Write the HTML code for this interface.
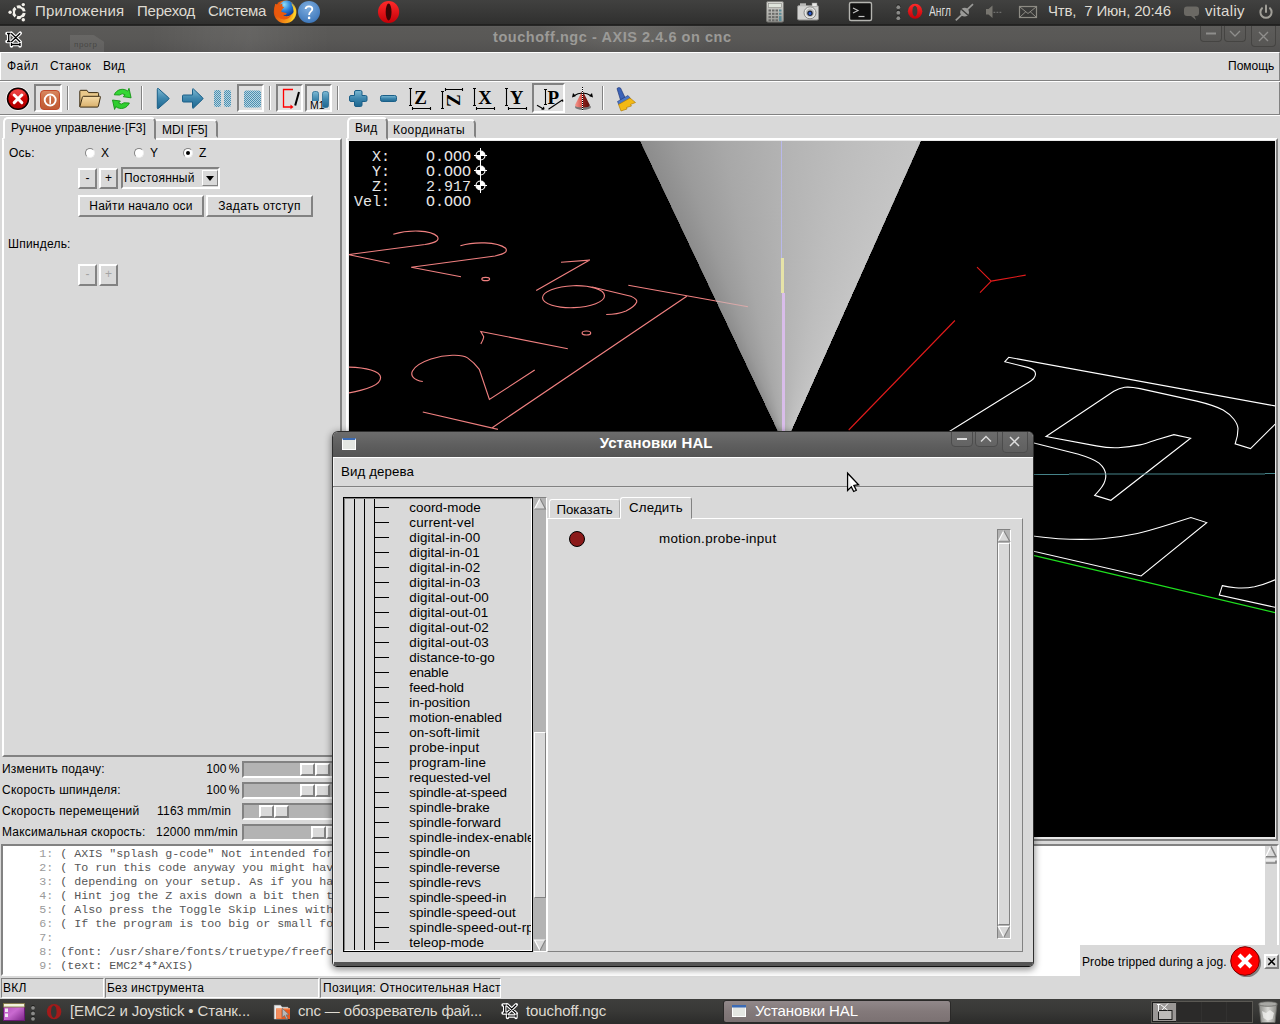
<!DOCTYPE html>
<html><head><meta charset="utf-8"><title>AXIS</title>
<style>
html,body{margin:0;padding:0}
body{width:1280px;height:1024px;overflow:hidden;position:relative;background:#d9d9d9;font-family:"Liberation Sans",sans-serif;font-size:12px;color:#000}
.a{position:absolute;box-sizing:border-box;white-space:nowrap}
.r{border:2px solid;border-color:#fff #828282 #828282 #fff}
.s{border:2px solid;border-color:#828282 #fff #fff #828282}
.r1{border:1px solid;border-color:#fff #828282 #828282 #fff}
.s1{border:1px solid;border-color:#828282 #fff #fff #828282}
.t{position:absolute;white-space:nowrap;line-height:14px;letter-spacing:.22px}
.btn{text-align:center;line-height:17px;background:#d9d9d9;letter-spacing:.2px}
.pt{position:absolute;white-space:pre;color:#dfdbd2;font-size:15px;line-height:18px}
.tr{position:absolute;white-space:nowrap;font-size:13.4px;line-height:15px;left:77px;color:#000}
.tk{position:absolute;left:42px;width:15px;height:1px;background:#000}
.gc{position:absolute;white-space:pre;font-family:"Liberation Mono",monospace;font-size:11.667px;line-height:14px;left:4.4px;color:#565656}
.gc i{font-style:normal;color:#9a9a9a}
.dro{position:absolute;white-space:pre;font-family:"Liberation Mono",monospace;font-size:15px;line-height:15px;left:354px;color:#e6e6e6}
svg{position:absolute;overflow:visible}
</style></head>
<body>
<!-- ===== AXIS window title ===== -->
<div class="a" style="left:0;top:25px;width:1280px;height:27px;background:radial-gradient(ellipse 90px 30px at 625px 10px,rgba(255,250,240,.10),rgba(255,250,240,0)),linear-gradient(#6a6968 0,#5b5a58 2px,#595856 50%,#525150)"></div>
<div class="a" style="left:0;top:26px;width:1280px;height:26px;background:linear-gradient(90deg,rgba(255,255,255,0) 0,rgba(255,255,255,0) 150px,rgba(255,255,255,.05) 210px,rgba(255,255,255,.07) 250px,rgba(255,255,255,0) 330px)"></div>
<div class="a" style="left:70px;top:35px;width:34px;height:17px;background:rgba(255,255,255,.085);clip-path:polygon(0 0,70% 0,100% 40%,100% 100%,0 100%)"></div>
<div class="t" style="left:74px;top:40px;font-size:8px;line-height:9px;color:rgba(50,50,48,.6);letter-spacing:.6px">прогр</div>
<svg style="left:0;top:25px" width="30" height="27" viewBox="0 25 30 27"><path d="M7 33.500h3.500M8.700 33.500v8M7 41.500h3.500M11.200 33.200l9 8.800M20.200 33.200l-9 8.800M11.500 44.500h8.500M11.500 43v3M20 43v3" stroke="#fff" stroke-width="3.600" stroke-linecap="round" stroke-linejoin="round" fill="none"/><path d="M7 33.500h3.500M8.700 33.500v8M7 41.500h3.500M11.200 33.200l9 8.800M20.200 33.200l-9 8.800M11.500 44.500h8.500M11.500 43v3M20 43v3" stroke="#000" stroke-width="1.300" fill="none"/></svg>
<div class="t" style="left:493px;top:29px;font-size:14.5px;font-weight:bold;color:#9b9a97;line-height:16px;letter-spacing:.55px">touchoff.ngc - AXIS 2.4.6 on cnc</div>
<!-- title buttons -->
<div class="a" style="left:1200px;top:25px;width:22px;height:17px;border:1px solid #454442;border-top:0;border-radius:0 0 4px 4px;background:linear-gradient(#5e5d5b,#575654)"></div>
<div class="a" style="left:1224px;top:25px;width:22px;height:17px;border:1px solid #454442;border-top:0;border-radius:0 0 4px 4px;background:linear-gradient(#5e5d5b,#575654)"></div>
<div class="a" style="left:1251px;top:25px;width:25px;height:22px;border:1px solid #454442;border-top:0;border-radius:0 0 4px 4px;background:linear-gradient(#5e5d5b,#575654)"></div>
<svg style="left:1200px;top:25px" width="80" height="24"><path d="M6 8.5h10" stroke="#8f8e8c" stroke-width="2" fill="none"/><path d="M30 6l5 5 5-5" stroke="#8f8e8c" stroke-width="1.3" fill="none"/><path d="M59 7l9 9M68 7l-9 9" stroke="#8f8e8c" stroke-width="1.4" fill="none"/></svg>

<!-- menubar -->
<div class="a" style="left:0;top:52px;width:1280px;height:28px;background:#d9d9d9;border-top:1px solid #fff;border-left:1px solid #fff;border-right:1px solid #828282"></div>
<div class="t" style="left:7px;top:59px;letter-spacing:.5px">Файл</div>
<div class="t" style="left:50px;top:59px;letter-spacing:.3px">Станок</div>
<div class="t" style="left:103px;top:59px;letter-spacing:0">Вид</div>
<div class="t" style="left:1228px;top:59px;letter-spacing:0">Помощь</div>
<div class="a" style="left:0;top:80px;width:1280px;height:2px;border-top:1px solid #828282;border-bottom:1px solid #fff"></div>
<div class="a" style="left:1278px;top:82px;width:2px;height:32px;border-right:1px solid #828282"></div>
<div class="a" style="left:0;top:114px;width:1280px;height:2px;border-top:1px solid #828282;border-bottom:1px solid #fff"></div>
<!-- toolbar -->
<div class="a s" style="left:34px;top:84px;width:28px;height:28px;background:#dfdfdf"></div>
<div class="a s" style="left:237px;top:84px;width:27px;height:28px;background:#dfdfdf"></div>
<div class="a s" style="left:276px;top:84px;width:27px;height:28px;background:#dfdfdf"></div>
<div class="a s" style="left:305px;top:84px;width:27px;height:28px;background:#dfdfdf"></div>
<div class="a s" style="left:532px;top:83px;width:33px;height:30px;background:#dfdfdf"></div>
<svg style="left:0;top:82px" width="660" height="32" viewBox="0 82 660 32">
<defs>
<linearGradient id="bl" x1="0" y1="0" x2="0" y2="1"><stop offset="0" stop-color="#7db9d3"/><stop offset=".5" stop-color="#3d86ad"/><stop offset="1" stop-color="#1d668f"/></linearGradient>
<linearGradient id="rd" x1="0" y1="0" x2="0" y2="1"><stop offset="0" stop-color="#e82222"/><stop offset=".5" stop-color="#cc0404"/><stop offset="1" stop-color="#a80000"/></linearGradient>
<linearGradient id="og" x1="0" y1="0" x2="0" y2="1"><stop offset="0" stop-color="#d98a63"/><stop offset=".5" stop-color="#c9683f"/><stop offset="1" stop-color="#bf5a33"/></linearGradient>
<linearGradient id="fd" x1="0" y1="0" x2="0" y2="1"><stop offset="0" stop-color="#f6dca8"/><stop offset="1" stop-color="#d9b06c"/></linearGradient>
<linearGradient id="cn" x1="0" y1="0" x2="1" y2="0"><stop offset="0" stop-color="#f49a90"/><stop offset=".45" stop-color="#d9574d"/><stop offset=".55" stop-color="#8e1f1a"/><stop offset="1" stop-color="#5a100c"/></linearGradient>
<pattern id="st" width="2" height="2" patternUnits="userSpaceOnUse"><rect width="2" height="2" fill="#b7d5e2"/><rect width="1" height="1" fill="#4d8fb0"/><rect x="1" y="1" width="1" height="1" fill="#4d8fb0"/></pattern>
</defs>
<!-- separators -->
<g stroke-width="1"><path d="M67.5 86v24M141.5 86v24M269.5 86v24M337.5 86v24M602.5 86v24" stroke="#828282"/><path d="M68.5 86v24M142.5 86v24M270.5 86v24M338.5 86v24M603.5 86v24" stroke="#fff"/></g>
<!-- estop -->
<circle cx="18" cy="98.800" r="11.800" fill="none" stroke="#fff" stroke-width="1" opacity=".75"/><circle cx="18" cy="98.800" r="10.500" fill="url(#rd)" stroke="#100000" stroke-width="1.500"/>
<ellipse cx="18" cy="93.5" rx="7.5" ry="4" fill="#ff8a8a" opacity=".35"/>
<path d="M14.200 95l7.600 7.600M21.800 95l-7.600 7.600" stroke="#fff" stroke-width="3" stroke-linecap="round"/>
<!-- power -->
<rect x="40.5" y="90.5" width="19" height="19" rx="3.5" fill="url(#og)" stroke="#c24a2a" stroke-width="1"/>
<circle cx="50.200" cy="100" r="5.500" fill="none" stroke="#fff" stroke-width="1.900"/><path d="M50.200 96.300v7.400" stroke="#fff" stroke-width="1.600"/>
<!-- folder -->
<path d="M79.8 106.6V91.2q0-.9.9-.9h6.2l1.6 2.3h9.2q.9 0 .9.9v3.2" fill="#e9c88a" stroke="#3a2a10" stroke-width="1"/>
<path d="M79.8 106.8l2.6-9.6q.3-.9 1.200-.9h16q1 0 .8.900l-2 9q-.2.900-1.200.9H80.600q-.9 0-.8-.3z" fill="url(#fd)" stroke="#3a2a10" stroke-width="1"/>
<!-- reload -->
<path d="M114.24 94.80A8.8 8.8 0 0 1 127.82 91.17L129.00 88.32L131.09 97.80L123.25 96.74L124.99 94.79A4.2 4.2 0 0 0 119.54 95.03Z" fill="#35d835" stroke="#149414" stroke-width=".9" stroke-linejoin="round"/>
<path d="M129.36 103.00A8.8 8.8 0 0 1 115.78 106.63L114.60 109.48L112.51 100.00L120.35 101.06L118.61 103.01A4.2 4.2 0 0 0 124.06 102.77Z" fill="#2fce2f" stroke="#149414" stroke-width=".9" stroke-linejoin="round"/>
<!-- play -->
<path d="M158.300 88.500q-1-.5-1 .8v18.500q0 1.300 1 .7l10.400-9.200q.8-.8 0-1.500z" fill="url(#bl)" stroke="#1a5f88" stroke-width="1"/>
<!-- step -->
<path d="M183.500 95h9v-5.500q0-1.200 1-.5l9.200 8.800q.7.700 0 1.400l-9.200 8.800q-1 .7-1-.5V102h-9q-1 0-1-1v-5q0-1 1-1z" fill="url(#bl)" stroke="#1a5f88" stroke-width="1"/>
<!-- pause (disabled) -->
<rect x="214" y="90" width="7" height="17" rx="2" fill="url(#st)"/><rect x="224" y="90" width="7" height="17" rx="2" fill="url(#st)"/>
<!-- stop (disabled) -->
<rect x="244" y="90.500" width="17" height="17" rx="2" fill="url(#st)"/>
<!-- skip -->
<path d="M293 89.500h-9.500v17.500h8" fill="none" stroke="#f00" stroke-width="1.300"/><path d="M290.500 104.500l3 2.500l-3 2.200z" fill="#f00"/>
<path d="M299 92l-3.800 13.500" stroke="#000" stroke-width="2"/>
<!-- M1 -->
<rect x="312.500" y="91.500" width="6" height="16" rx="2" fill="url(#bl)" stroke="#2a6f96" stroke-width=".8"/><rect x="322.500" y="91.500" width="6" height="16" rx="2" fill="url(#bl)" stroke="#2a6f96" stroke-width=".8"/>
<rect x="310" y="101" width="12.500" height="9" fill="#dfdfdf"/>
<text x="310" y="109" font-family="Liberation Sans" font-size="10.500" fill="#000">M1</text>
<!-- plus / minus -->
<path d="M356 90.500h4.500q1.500 0 1.500 1.500v3.500h3.500q1.500 0 1.500 1.500v3q0 1.500-1.500 1.500H362v3.500q0 1.500-1.500 1.500H356q-1.500 0-1.500-1.500V101.500H351q-1.500 0-1.500-1.500v-3q0-1.500 1.500-1.500h3.500V92q0-1.500 1.500-1.500z" fill="url(#bl)" stroke="#1a5f88" stroke-width="1"/>
<rect x="380.500" y="95.500" width="16" height="6" rx="1.800" fill="url(#bl)" stroke="#1a5f88" stroke-width="1"/>
<!-- Z -->
<g stroke="#000" stroke-width="1.100" fill="none">
<path d="M410.500 88v17.500M409 88.500h3M409 105.500h3M412.500 108.500h18M412.500 107v3M430.500 107v3"/>
<path d="M442.500 91v18M441 91.500h3M441 108.500h3M445.500 89.500h17.500M445.500 88v3M462.500 88v3"/>
<path d="M474.500 88v17.500M473 88.500h3M473 105.500h3M476.500 108.500h18M476.500 107v3M494.500 107v3"/>
<path d="M506.500 88v17.500M505 88.500h3M505 105.500h3M508.500 108.500h18M508.500 107v3M526.500 107v3"/>
<path d="M545.500 89.500v15M544 89.500h3M544 104.500h3"/>
<path d="M537 105.200l7 4.100M548.500 109.300l14.200-9.600M562.700 99.700v2M544 109.300l-.5-2.500M544 109.300l-2.500 0"/>
</g>
<g font-family="Liberation Serif" font-weight="bold" font-size="19" fill="#000">
<text x="414.300" y="103.500">Z</text>
<text x="478.200" y="103.500" font-size="18.500">X</text>
<text x="510" y="103.500" font-size="18.500">Y</text>
<text x="547.500" y="103.800" font-size="19">P</text>
<text transform="translate(447 94) rotate(90)" x="0" y="0" font-size="19">Z</text>
</g>
<!-- cone -->
<ellipse cx="583" cy="107" rx="8" ry="3" fill="#000" opacity=".45"/>
<path d="M582.400 90.400L575 105q0 2.500 7.400 2.500t7.400-2.500z" fill="url(#cn)"/>
<path d="M573.500 96q9-6 18 0" fill="none" stroke="#000" stroke-width="1.200"/>
<path d="M572 97.500l1-4.500l3 3zM593 97.500l-1-4.500l-3 3z" fill="#000"/>
<path d="M582.500 87v24" stroke="#000" stroke-width="1" stroke-dasharray="1 1"/><path d="M582.500 88v23" stroke="#fff" stroke-width="1" stroke-dasharray="1 1"/>
<!-- broom -->
<path d="M617 88.500q1.500-1.500 3.500-.5l4.500 9.500l-4.500 2.500z" fill="#3b63b8" stroke="#22397a" stroke-width=".7"/>
<path d="M617.500 101.500l10.500-6l2.500 3l-11.500 6.500z" fill="#4a78c8" stroke="#22397a" stroke-width=".6"/>
<path d="M618.500 104.500l11.500-6.500l5.500 4.500l-5 2l1 1.500l-5 1.500l.5 1.500l-6 2z" fill="#f3b914" stroke="#a97400" stroke-width=".6"/>
</svg>


<!-- left notebook -->
<div class="a r" style="left:2px;top:138px;width:340px;height:619px"></div>
<div class="a" style="left:3px;top:117px;width:153px;height:23px;background:#d9d9d9;border:2px solid;border-color:#fff #828282 #d9d9d9 #fff;border-radius:5px 5px 0 0"></div>
<div class="a" style="left:156px;top:119px;width:62px;height:19px;background:#d9d9d9;border:2px solid;border-color:#fff #828282 transparent #d9d9d9;border-radius:0 5px 0 0;border-left:0"></div>
<div class="t" style="left:11px;top:121px;letter-spacing:.05px">Ручное управление·[F3]</div>
<div class="t" style="left:162px;top:123px;letter-spacing:-.05px">MDI [F5]</div>

<div class="t" style="left:9px;top:146px">Ось:</div>
<div class="t" style="left:101px;top:146px">X</div>
<div class="t" style="left:150px;top:146px">Y</div>
<div class="t" style="left:199px;top:146px">Z</div>
<div class="a" style="left:85px;top:148px;width:10px;height:10px;border-radius:50%;background:#fff;border:1px solid;border-color:#828282 #eee #eee #828282"></div>
<div class="a" style="left:134px;top:148px;width:10px;height:10px;border-radius:50%;background:#fff;border:1px solid;border-color:#828282 #eee #eee #828282"></div>
<div class="a" style="left:183px;top:148px;width:10px;height:10px;border-radius:50%;background:#fff;border:1px solid;border-color:#828282 #eee #eee #828282"></div>
<div class="a" style="left:186px;top:151px;width:4px;height:4px;border-radius:50%;background:#000"></div>

<div class="a r btn" style="left:78px;top:168px;width:19px;height:21px">-</div>
<div class="a r btn" style="left:99px;top:168px;width:19px;height:21px">+</div>
<div class="a s" style="left:121px;top:167px;width:99px;height:22px"></div>
<div class="t" style="left:124px;top:171px">Постоянный</div>
<div class="a r1" style="left:202px;top:170px;width:16px;height:16px"></div>
<div class="a" style="left:205.800px;top:176px;width:0;height:0;border:4.500px solid transparent;border-top:5px solid #000;border-bottom:0"></div>
<div class="a r btn" style="left:78px;top:195px;width:126px;height:22px;line-height:18px">Найти начало оси</div>
<div class="a r btn" style="left:206px;top:195px;width:107px;height:22px;line-height:18px;letter-spacing:.32px">Задать отступ</div>
<div class="t" style="left:8px;top:237px">Шпиндель:</div>
<div class="a r btn" style="left:78px;top:264px;width:19px;height:22px;color:#a3a3a3">-</div>
<div class="a r btn" style="left:99px;top:264px;width:19px;height:22px;color:#a3a3a3">+</div>

<!-- sliders -->
<div class="t" style="left:2px;top:762px">Изменить подачу:</div>
<div class="t" style="left:2px;top:783px">Скорость шпинделя:</div>
<div class="t" style="left:2px;top:804px">Скорость перемещений</div>
<div class="t" style="left:2px;top:825px">Максимальная скорость:</div>
<div class="t" style="left:140px;width:99.500px;text-align:right;top:762px;letter-spacing:0;word-spacing:-.900px">100 %</div>
<div class="t" style="left:140px;width:99.500px;text-align:right;top:783px;letter-spacing:0;word-spacing:-.900px">100 %</div>
<div class="t" style="left:157px;top:804px">1163 mm/min</div>
<div class="t" style="left:156px;top:825px">12000 mm/min</div>
<div class="a s" style="left:242px;top:761px;width:100px;height:17px;background:#b3b3b3"></div>
<div class="a s" style="left:242px;top:782px;width:100px;height:17px;background:#b3b3b3"></div>
<div class="a s" style="left:242px;top:803px;width:100px;height:17px;background:#b3b3b3"></div>
<div class="a s" style="left:242px;top:824px;width:100px;height:17px;background:#b3b3b3"></div>
<div class="a r" style="left:300px;top:763px;width:15px;height:13px;background:#d9d9d9"></div><div class="a r" style="left:315px;top:763px;width:15px;height:13px;background:#d9d9d9"></div>
<div class="a r" style="left:300px;top:784px;width:15px;height:13px;background:#d9d9d9"></div><div class="a r" style="left:315px;top:784px;width:15px;height:13px;background:#d9d9d9"></div>
<div class="a r" style="left:259px;top:805px;width:15px;height:13px;background:#d9d9d9"></div><div class="a r" style="left:274px;top:805px;width:15px;height:13px;background:#d9d9d9"></div>
<div class="a r" style="left:311px;top:826px;width:15px;height:13px;background:#d9d9d9"></div><div class="a r" style="left:326px;top:826px;width:15px;height:13px;background:#d9d9d9"></div>

<!-- pane sash between top and text -->
<!-- gcode text -->
<div class="a s" style="left:1px;top:844px;width:1278px;height:132px;background:#fff"></div>
<div class="gc" style="top:847px"><i>     1: </i>( AXIS "splash g-code" Not intended for actual milling )</div>
<div class="gc" style="top:861px"><i>     2: </i>( To run this code anyway you might have to Touch Off the Z axis)</div>
<div class="gc" style="top:875px"><i>     3: </i>( depending on your setup. As if you had some material in your mill... )</div>
<div class="gc" style="top:889px"><i>     4: </i>( Hint jog the Z axis down a bit then touch off )</div>
<div class="gc" style="top:903px"><i>     5: </i>( Also press the Toggle Skip Lines with "/" to see that part )</div>
<div class="gc" style="top:917px"><i>     6: </i>( If the program is too big or small for your machine, change the scale below )</div>
<div class="gc" style="top:931px"><i>     7: </i></div>
<div class="gc" style="top:945px"><i>     8: </i>(font: /usr/share/fonts/truetype/freefont/FreeSerifBoldItalic.ttf)</div>
<div class="gc" style="top:959px"><i>     9: </i>(text: EMC2*4*AXIS)</div>
<!-- text scrollbar -->
<div class="a" style="left:1265px;top:846px;width:12px;height:128px;background:#d9d9d9"></div>
<svg style="left:1265px;top:846px" width="12" height="20"><path d="M5.900 .3L.6 11h11z" fill="#d9d9d9"/><path d="M5.900 .3L.6 11" stroke="#fff" stroke-width="1.300" fill="none"/><path d="M.8 10.800h10.800M11.300 11L5.900 .3" stroke="#828282" stroke-width="1.500" fill="none"/><path d="M.5 14h11" stroke="#fff" stroke-width="1"/><path d="M.8 17h10.800M11 14.500v3" stroke="#828282" stroke-width="1.600" fill="none"/></svg>

<!-- status bar -->
<div class="a s1" style="left:1px;top:978px;width:103px;height:20px"></div>
<div class="a s1" style="left:105px;top:978px;width:214px;height:20px"></div>
<div class="a s1" style="left:320px;top:978px;width:181px;height:20px"></div>
<div class="t" style="left:3px;top:981px">ВКЛ</div>
<div class="t" style="left:107px;top:981px">Без инструмента</div>
<div class="t" style="left:323px;top:981px;letter-spacing:.3px">Позиция: Относительная Наст</div>

<!-- right notebook -->
<div class="a" style="left:346px;top:138px;width:932px;height:703px;border:2px solid;border-color:#fff #828282 #828282 #fff"></div>
<div class="a" style="left:347px;top:117px;width:41px;height:23px;background:#d9d9d9;border:2px solid;border-color:#fff #828282 #d9d9d9 #fff;border-radius:5px 5px 0 0"></div>
<div class="a" style="left:388px;top:119px;width:88px;height:19px;background:#d9d9d9;border:2px solid;border-color:#fff #828282 transparent #d9d9d9;border-radius:0 5px 0 0;border-left:0"></div>
<div class="t" style="left:355px;top:121px">Вид</div>
<div class="t" style="left:393px;top:123px;letter-spacing:.45px">Координаты</div>
<!-- ===== GL view ===== -->
<div class="a" style="left:348px;top:140px;width:928px;height:699px;background:#e9e9e9"></div>
<div class="a" style="left:349px;top:141px;width:926px;height:696px;background:#000;overflow:hidden">
<div class="a" style="left:-349px;top:-141px;width:1280px;height:1024px;background:conic-gradient(from -25.4deg at 784.7px 446px,#8c8c8c 0deg,#9b9b9b 6deg,#a8a8a8 14deg,#b3b3b3 25deg,#bdbdbd 37deg,#c5c5c5 49.5deg,#000 49.5deg);clip-path:polygon(640px 141px,921px 141px,784.7px 446px)"></div>
<svg style="left:-349px;top:-141px" width="1280" height="1024" viewBox="0 0 1280 1024" fill="none" stroke-width="1.1">
<!-- tool path centre line -->
<path d="M781.5 141V258" stroke="#b9b9ea" stroke-width="1"/>
<path d="M782.5 258V293" stroke="#e6e3a8" stroke-width="3"/>
<path d="M783.5 293V440" stroke="#d9bdea" stroke-width="3"/>
<g stroke="#f08080" stroke-width="1.15">
<path d="M393.3 234.3C409 229.5 431 229.8 437.4 236.5C440 241 434 243 425 244.5L349 254.5M349 254.7L389.7 263.3"/>
<path d="M460.4 245.7C474 241.5 497 241.5 505.7 248.3C508 252 504 254 495 256L411.2 267.2L461 276.7"/>
<ellipse cx="485.7" cy="279" rx="3.9" ry="1.7"/>
<path d="M561 262.3L589.7 260.1L536.2 290.6"/>
<ellipse cx="573.5" cy="296.7" rx="31" ry="11" transform="rotate(-2 573.5 296.7)"/>
<path d="M592.2 287L630.9 296.2C635 298 637.5 300 636.7 302C635 306 632 308 626 311C620 313.5 612 314.5 606.2 314.5"/>
<ellipse cx="586.4" cy="333" rx="4.3" ry="2"/>
<path d="M480.8 343.9C483 340 484 338 483.6 336.4L480.8 331.5L567.8 348.7"/>
<path d="M422.8 381.5C414 380 410 376 412.5 371C415 366 422 362 431 359C445 354.5 462 354 467.5 357.9C472 361 476 365 479.3 369.3L489.4 399.4L534.7 370.1"/>
<path d="M349 367.1C366 367.5 380 371 380.5 377C381 381 378 384 372 386.5C366 389 357 391.5 349 392.9"/>
<path d="M422.8 412L498 429.4M492.2 427.7L686.8 296.2"/>
</g>
<path d="M628.3 285.3L716 301" stroke="#f08080" stroke-width="1.15"/>
<path d="M716 301L748 306.7" stroke="#d9a9a9"/>
<!-- red axes -->
<g stroke="#e31b1b">
<path d="M848.7 430L954.9 320.5"/>
<path d="M991.2 281.1L977 267.2M991.2 281.1L1025.7 275.1M991.2 281.1L980 292.7"/>
</g>
<!-- white outlines -->
<g stroke="#fff">
<path d="M1275.2 405.9L1008.75 357.3L1004.8 361.7L1028.4 367.6C1033 369 1035.5 371.5 1035.5 374C1035.5 378 1032 380.5 1028.4 382.5L1000 400L926 446"/>
<path d="M1275.2 424.1L1250.5 448.6L1235.2 443.8C1237 439 1238 434 1238 428.4C1237.5 423 1232 415 1223.1 409.9C1215 406 1206 403.3 1196.9 401.1L1140 388.6C1133 387.2 1128 386.8 1124.7 387.3C1120 388 1116 390 1113.8 391.3L1046 436.5L1096.3 445.9C1104 447.3 1112 448 1118.1 447.7C1126 447.3 1134 446.2 1140 444.9C1146 443.5 1152 441.3 1157.5 439.4L1173.9 434.6L1190.6 438.3L1110.9 500.3L1094.7 495.4C1100 490 1104 485 1105 480.7C1106.5 476 1106 469 1099.1 463.1C1093 458.5 1086 456.5 1078.6 454.3L1026 441"/>
<path d="M1026 535C1036 536.5 1048 538 1058.1 538.7C1072 539.5 1088 539.7 1102.1 538.7C1114 537.7 1126 536 1137.3 533.5C1147 531.3 1157 528.3 1166.6 525.3L1190.9 517.6L1206.7 522.6L1141.1 576L1026 549.5"/>
<path d="M1275 579.8C1268 582.8 1261 585.3 1254.5 586.8C1248 588 1241 588.2 1235.4 587.7C1230 587.2 1226 586.5 1222.3 585.6L1219.3 595L1275 607.3"/>
</g>
<path d="M1026 474.5H1069M1069 474H1265M1265 473.5H1275" stroke="#46848a"/>
<path d="M1026 553.7L1275 612.6" stroke="#1fe01f" stroke-width="1.3"/>
<!-- DRO marks -->
<g id="m"><circle cx="480.500" cy="155.500" r="4.500" fill="#fff"/><path d="M480.500 155.500h-4.500a4.500 4.500 0 0 1 4.500-4.500zM480.500 155.500h4.500a4.500 4.500 0 0 1-4.500 4.500z" fill="#000"/><circle cx="480.500" cy="155.500" r="4.500" fill="none" stroke="#fff" stroke-width="1.100"/><path d="M474 155.500h13M480.500 148v15" stroke="#fff" stroke-width="1"/></g>
<use href="#m" y="15"/><use href="#m" y="30"/>
</svg>
</div>
<div class="dro" style="top:150px">  X:    O.OOO</div>
<div class="dro" style="top:165px">  Y:    O.OOO</div>
<div class="dro" style="top:180px">  Z:    2.917</div>
<div class="dro" style="top:195px">Vel:    O.OOO</div>
<!-- ===== HAL window ===== -->
<div class="a" style="left:332px;top:431px;width:702px;height:536px;border-radius:6px 6px 5px 5px;box-shadow:0 2px 7px 1px rgba(0,0,0,.42)"></div>
<div class="a" style="left:332px;top:431px;width:702px;height:536px;background:#d9d9d9;border-radius:6px 6px 5px 5px;border:1px solid #2e2e2e;border-bottom:1px solid #111;overflow:hidden">
 <div class="a" style="left:0;top:530px;width:700px;height:4px;background:#555"></div>
 <div class="a" style="left:0;top:0;width:700px;height:25px;background:linear-gradient(#6d6d6d,#5f5f5f 50%,#545454)"></div>
 <div class="a" style="left:0;top:25px;width:700px;height:1px;background:#fff"></div>
 <div class="a" style="left:0;top:26px;width:1px;height:510px;background:#f4f4f4"></div>
 <!-- icon -->
 <div class="a" style="left:9px;top:6px;width:14px;height:12px;background:#e4e6e2;border:1px solid #fff;border-top:2px solid #3b6bb5"></div>
 <div class="t" style="left:266.700px;top:2px;font-size:15px;font-weight:bold;color:#fff;line-height:18px;letter-spacing:.1px">Установки HAL</div>
 <!-- buttons -->
 <div class="a" style="left:618px;top:-1px;width:22px;height:16px;border:1px solid #4c4c4c;border-radius:0 0 4px 4px;background:linear-gradient(#6c6c6c,#636363)"></div>
 <div class="a" style="left:642px;top:-1px;width:23px;height:16px;border:1px solid #4c4c4c;border-radius:0 0 4px 4px;background:linear-gradient(#6c6c6c,#636363)"></div>
 <div class="a" style="left:669px;top:-1px;width:26px;height:22px;border:1px solid #4c4c4c;border-radius:0 0 4px 4px;background:linear-gradient(#6c6c6c,#5f5f5f)"></div>
 <svg style="left:618px;top:0" width="80" height="24"><path d="M6 7h10" stroke="#dedede" stroke-width="2" fill="none"/><path d="M30 9.5l5-5 5 5" stroke="#dedede" stroke-width="1.4" fill="none"/><path d="M59 5l9 9M68 5l-9 9" stroke="#dedede" stroke-width="1.5" fill="none"/></svg>
 <!-- menu -->
 <div class="t" style="left:8px;top:32px;font-size:13.3px;line-height:15px;letter-spacing:.1px">Вид дерева</div>
 <div class="a" style="left:0;top:54px;width:700px;height:2px;border-top:1px solid #828282;border-bottom:1px solid #dedede"></div>
 <!-- tree -->
 <div class="a" style="left:10px;top:65px;width:190px;height:455px;border:1px solid #000"></div>
 <div class="a" style="left:11px;top:66px;width:188px;height:453px;border:1px solid;border-color:#828282 #fff #fff #828282;overflow:hidden">
  <div class="a" style="left:9px;top:0;width:1px;height:460px;background:#000"></div>
  <div class="a" style="left:19px;top:0;width:1px;height:460px;background:#000"></div>
  <div class="a" style="left:29px;top:0;width:1px;height:460px;background:#000"></div>
  <div class="a" style="left:-12.700px;top:1px;width:300px;height:460px"><div class="tk" style="top:7px"></div><div class="tr" style="top:0px;letter-spacing:0.00px">coord-mode</div>
<div class="tk" style="top:22px"></div><div class="tr" style="top:15px;letter-spacing:0.17px">current-vel</div>
<div class="tk" style="top:37px"></div><div class="tr" style="top:30px;letter-spacing:0.13px">digital-in-00</div>
<div class="tk" style="top:52px"></div><div class="tr" style="top:45px;letter-spacing:0.09px">digital-in-01</div>
<div class="tk" style="top:67px"></div><div class="tr" style="top:60px;letter-spacing:0.13px">digital-in-02</div>
<div class="tk" style="top:82px"></div><div class="tr" style="top:75px;letter-spacing:0.13px">digital-in-03</div>
<div class="tk" style="top:97px"></div><div class="tr" style="top:90px;letter-spacing:0.16px">digital-out-00</div>
<div class="tk" style="top:112px"></div><div class="tr" style="top:105px;letter-spacing:0.12px">digital-out-01</div>
<div class="tk" style="top:127px"></div><div class="tr" style="top:120px;letter-spacing:0.16px">digital-out-02</div>
<div class="tk" style="top:142px"></div><div class="tr" style="top:135px;letter-spacing:0.16px">digital-out-03</div>
<div class="tk" style="top:157px"></div><div class="tr" style="top:150px;letter-spacing:0.04px">distance-to-go</div>
<div class="tk" style="top:172px"></div><div class="tr" style="top:165px;letter-spacing:-0.19px">enable</div>
<div class="tk" style="top:187px"></div><div class="tr" style="top:180px;letter-spacing:-0.15px">feed-hold</div>
<div class="tk" style="top:202px"></div><div class="tr" style="top:195px;letter-spacing:-0.02px">in-position</div>
<div class="tk" style="top:217px"></div><div class="tr" style="top:210px;letter-spacing:0.02px">motion-enabled</div>
<div class="tk" style="top:232px"></div><div class="tr" style="top:225px;letter-spacing:0.07px">on-soft-limit</div>
<div class="tk" style="top:247px"></div><div class="tr" style="top:240px;letter-spacing:0.21px">probe-input</div>
<div class="tk" style="top:262px"></div><div class="tr" style="top:255px;letter-spacing:0.13px">program-line</div>
<div class="tk" style="top:277px"></div><div class="tr" style="top:270px;letter-spacing:0.01px">requested-vel</div>
<div class="tk" style="top:292px"></div><div class="tr" style="top:285px;letter-spacing:-0.09px">spindle-at-speed</div>
<div class="tk" style="top:307px"></div><div class="tr" style="top:300px;letter-spacing:0.01px">spindle-brake</div>
<div class="tk" style="top:322px"></div><div class="tr" style="top:315px;letter-spacing:0.01px">spindle-forward</div>
<div class="tk" style="top:337px"></div><div class="tr" style="top:330px;letter-spacing:0.08px">spindle-index-enable</div>
<div class="tk" style="top:352px"></div><div class="tr" style="top:345px;letter-spacing:-0.10px">spindle-on</div>
<div class="tk" style="top:367px"></div><div class="tr" style="top:360px;letter-spacing:-0.06px">spindle-reverse</div>
<div class="tk" style="top:382px"></div><div class="tr" style="top:375px;letter-spacing:-0.06px">spindle-revs</div>
<div class="tk" style="top:397px"></div><div class="tr" style="top:390px;letter-spacing:-0.08px">spindle-speed-in</div>
<div class="tk" style="top:412px"></div><div class="tr" style="top:405px;letter-spacing:-0.01px">spindle-speed-out</div>
<div class="tk" style="top:427px"></div><div class="tr" style="top:420px;letter-spacing:0.08px">spindle-speed-out-rpm</div>
<div class="tk" style="top:442px"></div><div class="tr" style="top:435px;letter-spacing:0.02px">teleop-mode</div></div>
 </div>
 <!-- tree scrollbar -->
 <div class="a" style="left:200px;top:65px;width:14px;height:455px;background:#b3b3b3;border:1px solid;border-color:#828282 #fff #fff #b3b3b3"></div>
 <div class="a r1" style="left:201px;top:300px;width:12px;height:166px;background:#d9d9d9"></div>
 <svg style="left:201px;top:66px" width="12" height="453"><path d="M6 .5L0.500 11h11z" fill="#d9d9d9"/><path d="M6 .5L0.500 11" stroke="#fff" stroke-width="1.200" fill="none"/><path d="M0.500 11h11L6 .5" stroke="#828282" stroke-width="1.100" fill="none"/>
 <path d="M6 452.500L0.500 442h11z" fill="#d9d9d9"/><path d="M6 452.500L0.500 442h11" stroke="#fff" stroke-width="1.200" fill="none"/><path d="M11.500 442L6 452.500" stroke="#828282" stroke-width="1.100" fill="none"/></svg>
 <!-- notebook -->
 <div class="a" style="left:214px;top:86px;width:476px;height:434px;border:1px solid;border-color:#fff #828282 #828282 #fff"></div>
 <div class="a" style="left:216px;top:67px;width:71px;height:19px;border:1px solid;border-color:#fff #b0b0b0 transparent #fff;border-radius:3px 3px 0 0"></div>
 <div class="a" style="left:287px;top:65px;width:72px;height:22px;background:#d9d9d9;border:1px solid;border-color:#fff #828282 #d9d9d9 #fff;border-radius:3px 3px 0 0"></div>
 <div class="t" style="left:223.500px;top:70px;font-size:13.3px;line-height:15px;letter-spacing:-.05px">Показать</div>
 <div class="t" style="left:296px;top:68px;font-size:13.3px;line-height:15px;letter-spacing:.15px">Следить</div>
 <div class="a" style="left:236px;top:98.700px;width:16px;height:16px;border-radius:50%;background:#8b1a1a;border:1px solid #000"></div>
 <div class="t" style="left:326px;top:99px;font-size:13.4px;line-height:15px;letter-spacing:.32px">motion.probe-input</div>
 <!-- right scrollbar -->
 <div class="a" style="left:664px;top:97px;width:14px;height:410px;background:#b3b3b3;border:1px solid;border-color:#828282 #fff #fff #828282"></div>
 <div class="a" style="left:665px;top:111px;width:12px;height:382px;background:#d9d9d9;border:1px solid;border-color:#fff #828282 #828282 #fff"></div>
 <svg style="left:665px;top:98px" width="12" height="409"><path d="M5.800 .8L.4 11.300h11.300z" fill="#d9d9d9"/><path d="M5.800 .8L.4 11.300" stroke="#fff" stroke-width="1.200" fill="none"/><path d="M.4 11.300h11.300L5.800 .8" stroke="#828282" stroke-width="1.100" fill="none"/>
 <path d="M5.900 407.300L.4 396.500h11.300z" fill="#d9d9d9"/><path d="M5.900 407.300L.4 396.500h11.300" stroke="#fff" stroke-width="1.200" fill="none"/><path d="M11.700 396.500L5.900 407.300" stroke="#828282" stroke-width="1.100" fill="none"/></svg>
</div>
<!-- mouse cursor -->
<svg style="left:0;top:0" width="1280" height="1024" viewBox="0 0 1280 1024"><path d="M847.600 473.200V490.400L851.300 486.900L853.700 491.500L856.300 490.300L853.900 485.400L858.600 484.700Z" fill="#fff" stroke="#000" stroke-width="1.300" stroke-linejoin="miter"/><path d="M848.600 476v12l2.500-2.400z" fill="#ddd" opacity=".6"/></svg>
<!-- ===== notification ===== -->
<div class="a" style="left:1080px;top:945px;width:200px;height:33px;background:#d9d9d9"></div>
<div class="a" style="left:1265px;top:978px;width:15px;height:20px;background:#d9d9d9"></div>
<div class="t" style="left:1082px;top:955px;letter-spacing:.12px">Probe tripped during a jog.</div>
<svg style="left:1229px;top:945px" width="34" height="34" viewBox="0 0 34 34"><circle cx="17.800" cy="17.800" r="14.300" fill="#808080"/><circle cx="16" cy="16" r="14.300" fill="#f00" stroke="#7e0000" stroke-width="1"/><path d="M10 10l12 12M22 10l-12 12" stroke="#fff" stroke-width="4" fill="none"/></svg>
<div class="a r" style="left:1264px;top:954px;width:15px;height:15px"></div>
<svg style="left:1264px;top:954px" width="15" height="15"><path d="M4.300 4.300l6.600 6.600M10.900 4.300l-6.600 6.600" stroke="#000" stroke-width="1.500"/></svg>
<!-- ===== GNOME panels ===== -->
<div class="a" style="left:0;top:0;width:1280px;height:25px;background:linear-gradient(#414140,#3a3a39 40%,#2f2f2e)"></div>
<div class="a" style="left:0;top:24px;width:1280px;height:2px;background:linear-gradient(#1e1d1c,#2a2a29)"></div>
<svg style="left:0;top:0" width="1280" height="25" viewBox="0 0 1280 25">
<defs>
<radialGradient id="fxg" cx=".35" cy=".25" r=".8"><stop offset="0" stop-color="#8fe0fb"/><stop offset=".5" stop-color="#2a80d8"/><stop offset="1" stop-color="#0a2f8c"/></radialGradient>
<linearGradient id="fxo" x1="0" y1=".3" x2="1" y2=".6"><stop offset="0" stop-color="#dc4408"/><stop offset=".45" stop-color="#f07a14"/><stop offset=".8" stop-color="#f9a81a"/><stop offset="1" stop-color="#ffcf26"/></linearGradient>
<radialGradient id="hp" cx=".45" cy=".3" r=".75"><stop offset="0" stop-color="#7eaee0"/><stop offset="1" stop-color="#3a74b8"/></radialGradient>
<linearGradient id="op" x1="0" y1="0" x2="0" y2="1"><stop offset="0" stop-color="#ff2a2a"/><stop offset="1" stop-color="#c40008"/></linearGradient>
<linearGradient id="calc" x1="0" y1="0" x2="0" y2="1"><stop offset="0" stop-color="#d6d6d2"/><stop offset="1" stop-color="#9c9c98"/></linearGradient>
</defs>
<!-- ubuntu logo -->
<g fill="none" stroke="#f2f0ea" stroke-width="3"><path d="M24.23 11.36A5.4 5.4 0 0 0 16.96 7.16M15.50 8.00A5.4 5.4 0 0 0 15.50 16.40M16.96 17.24A5.4 5.4 0 0 0 24.23 13.04"/></g>
<circle cx="23.30" cy="4.58" r="2.800" fill="#393837"/><circle cx="10.10" cy="12.20" r="2.800" fill="#393837"/><circle cx="23.30" cy="19.82" r="2.800" fill="#393837"/><circle cx="23.30" cy="4.58" r="1.700" fill="#f2f0ea"/><circle cx="10.10" cy="12.20" r="1.700" fill="#f2f0ea"/><circle cx="23.30" cy="19.82" r="1.700" fill="#f2f0ea"/>
<!-- firefox -->
<circle cx="285.100" cy="11.900" r="11.300" fill="url(#fxo)"/>
<circle cx="286.500" cy="8.500" r="7.900" fill="url(#fxg)"/>
<path d="M275.200 3.700L278.500 5.200L282.200 3.400L282.400 6.600L284.200 7.200L282 9.400L281.100 11.800L286.800 13.300L285.900 14.700L282.900 14.900L285.500 16.600Q288.500 17.300 291.500 14.200Q290 19 284 19.500Q277 19 274.500 12Q273.800 7.500 275.200 3.700Z" fill="#e9590d"/>
<path d="M291.200 3.200Q295.500 6 295.800 12Q295.500 18 290.500 21.500Q294 16.500 293.600 11.500Q293.300 6.500 291.200 3.200Z" fill="#ffd42a" opacity=".9"/>
<!-- help -->
<circle cx="309" cy="11.900" r="11" fill="url(#hp)"/>
<path d="M305.600 9q.2-2.700 3.400-2.700q3.300 0 3.300 2.600q0 1.500-1.600 2.700q-1.600 1.300-1.600 3.300" fill="none" stroke="#fff" stroke-width="1.800"/><circle cx="309.100" cy="17.900" r="1.300" fill="#fff"/>
<!-- opera big -->
<ellipse cx="388.600" cy="12" rx="10.600" ry="11" fill="url(#op)"/><ellipse cx="388.600" cy="12" rx="2.900" ry="8.400" fill="#3a0606"/>
<!-- calculator -->
<rect x="766.500" y="1.500" width="17" height="20.500" rx="1.500" fill="url(#calc)" stroke="#7a7a76"/>
<rect x="768.500" y="3.500" width="13" height="4" fill="#dfe4dc" stroke="#8a8a86" stroke-width=".6"/>
<g fill="#6a6a68"><rect x="768.500" y="9.500" width="2.500" height="2"/><rect x="772" y="9.500" width="2.500" height="2"/><rect x="775.500" y="9.500" width="2.500" height="2"/><rect x="779" y="9.500" width="2.500" height="2" fill="#5a8a96"/>
<rect x="768.500" y="12.800" width="2.500" height="2"/><rect x="772" y="12.800" width="2.500" height="2"/><rect x="775.500" y="12.800" width="2.500" height="2"/><rect x="779" y="12.800" width="2.500" height="2" fill="#5a8a96"/>
<rect x="768.500" y="16.100" width="2.500" height="2"/><rect x="772" y="16.100" width="2.500" height="2"/><rect x="775.500" y="16.100" width="2.500" height="2"/><rect x="779" y="16.100" width="2.500" height="5" fill="#5a8a96"/>
<rect x="768.500" y="19.300" width="2.500" height="2"/><rect x="772" y="19.300" width="2.500" height="2"/><rect x="775.500" y="19.300" width="2.500" height="2"/></g>
<!-- camera -->
<rect x="797.500" y="5.500" width="21" height="14.500" rx="1.500" fill="#d2d2d0" stroke="#8c8c8a"/>
<rect x="800" y="3.300" width="6" height="3" fill="#b8b8b6"/><rect x="812" y="3" width="5" height="3.500" fill="#e8e8e6" stroke="#8c8c8a" stroke-width=".5"/>
<circle cx="810" cy="12.800" r="6" fill="#e6e6e4" stroke="#8a8a88"/><circle cx="810" cy="12.800" r="4.200" fill="#bcbcba"/><circle cx="810" cy="13.300" r="2.700" fill="#1c2438"/><circle cx="810" cy="13.500" r="1.400" fill="#2a5ed8"/>
<!-- terminal -->
<rect x="849.500" y="2.500" width="22" height="18" rx="1.500" fill="#111" stroke="#b4b4b0" stroke-width="1.400"/>
<path d="M853 8l5 2.500l-5 2.500" fill="none" stroke="#c4c4c4" stroke-width="1.100"/><path d="M858.500 16.500h6" stroke="#c4c4c4" stroke-width="1.200"/>
<!-- handle dots -->
<g fill="#1e1e1d"><circle cx="898.300" cy="6.300" r="2"/><circle cx="898.300" cy="11.800" r="2"/><circle cx="898.300" cy="17.300" r="2"/></g><g fill="#8b8b89"><circle cx="898.300" cy="7.200" r="1.900"/><circle cx="898.300" cy="12.700" r="1.900"/><circle cx="898.300" cy="18.200" r="1.900"/></g>
<!-- opera small -->
<ellipse cx="915.100" cy="11.200" rx="7.200" ry="7.500" fill="url(#op)"/><ellipse cx="914.900" cy="11.100" rx="2.500" ry="5.300" fill="#3b3d3b"/>
<!-- plug -->
<path d="M955.800 20.300L973 4.200" stroke="#9a9a98" stroke-width="1.700" fill="none"/><circle cx="964.600" cy="12.200" r="4.400" fill="#9a9a98"/><path d="M961.300 9.300l6.600 5.800" stroke="#3a3a38" stroke-width="1.300"/>
<!-- speaker muted -->
<path d="M986 9h2.500l4-3.500v12.500l-4-3.500H986z" fill="#77756f"/><path d="M993.500 12.300h1.800M996.500 12.300h1.800M999.500 12.300h1.800" stroke="#7c7c7a" stroke-width="1"/>
<!-- envelope -->
<rect x="1019.500" y="6.500" width="17" height="11" fill="none" stroke="#8d8b84" stroke-width="1.200"/><path d="M1020 7l8 6.500l8-6.500M1020 17l6-5.500M1036 17l-6-5.500" fill="none" stroke="#8d8b84" stroke-width="1"/>
<!-- chat bubble -->
<path d="M1187 6.500h9q3 0 3 3v3.500q0 3-3 3h-1.500l1.500 4l-5-4H1187q-3 0-3-3V9.500q0-3 3-3z" fill="#6b6964"/>
<!-- power -->
<g fill="none" stroke="#a19f98" stroke-width="2" stroke-linecap="round"><path d="M1262 8.300a5.600 5.600 0 1 0 8 0"/><path d="M1266 5.500v6.500"/></g>
</svg>
<div class="pt" style="left:35px;top:2px;letter-spacing:.15px">Приложения</div>
<div class="pt" style="left:137px;top:2px;letter-spacing:-.2px">Переход</div>
<div class="pt" style="left:208px;top:2px;letter-spacing:-.35px">Система</div>
<div class="pt" style="left:928.600px;top:2px;font-size:15.500px;transform:scaleX(.66);transform-origin:0 0;letter-spacing:0;color:#dcdcda">Англ</div>
<div class="pt" style="left:1048px;top:2px;letter-spacing:-.18px">Чтв,  7 Июн, 20:46</div>
<div class="pt" style="left:1205px;top:2px;letter-spacing:.35px">vitaliy</div>

<!-- bottom panel -->
<div class="a" style="left:0;top:999px;width:1280px;height:25px;background:linear-gradient(#3e3e3c,#393937 45%,#2b2b2a)"></div>
<div class="a" style="left:723px;top:1000px;width:228px;height:23px;border-radius:3px;background:linear-gradient(#91888a,#83797a 50%,#7b7172);border:1px solid #2a2928"></div>
<svg style="left:0;top:998px" width="1280" height="26" viewBox="0 998 1280 26">
<defs><linearGradient id="pu" x1="0" y1="0" x2="1" y2="1"><stop offset="0" stop-color="#b04bb8"/><stop offset=".5" stop-color="#c96ad0"/><stop offset="1" stop-color="#7a2386"/></linearGradient>
<linearGradient id="tr" x1="0" y1="0" x2="1" y2="0"><stop offset="0" stop-color="#8a8a86"/><stop offset=".5" stop-color="#d8d8d4"/><stop offset="1" stop-color="#8a8a86"/></linearGradient></defs>
<!-- show desktop -->
<rect x="3.500" y="1003.500" width="21" height="17" fill="url(#pu)" stroke="#6a1a76"/><rect x="3.500" y="1003.500" width="21" height="3.500" fill="#f2f2dc" stroke="#7a7a3a" stroke-width=".8"/><rect x="5" y="1008.500" width="3" height="3.500" fill="#f0e8f0"/><rect x="5" y="1013.500" width="3" height="3.500" fill="#f0e8f0"/>
<g fill="#1e1e1d"><circle cx="33" cy="1006.900" r="2"/><circle cx="33" cy="1012.500" r="2"/><circle cx="33" cy="1017.900" r="2"/></g><g fill="#8b8b89"><circle cx="33" cy="1007.800" r="1.900"/><circle cx="33" cy="1013.400" r="1.900"/><circle cx="33" cy="1018.800" r="1.900"/></g>
<!-- opera dark -->
<ellipse cx="54.100" cy="1011.700" rx="7.200" ry="7.600" fill="#a31a1a"/><ellipse cx="53.800" cy="1011.700" rx="2.800" ry="6.200" fill="#353533"/>
<!-- folder icon -->
<path d="M274.300 1005.300h6.200l1.500 2h6v11.700h-13.700z" fill="#ececec" stroke="#c8c8c8" stroke-width=".6"/>
<rect x="276.300" y="1008.300" width="13.700" height="10.700" fill="#ea5a1e"/><rect x="277" y="1009" width="4.500" height="9.500" fill="#f79a6a" opacity=".8"/><rect x="276.300" y="1008.300" width="13.700" height="1" fill="#f9b28a"/>
<path d="M282.300 1008.300v9l2.200-1.800l1.600 3.600l1.600-.7l-1.600-3.500l2.900-.2z" fill="#b8b8b8" stroke="#6e6e6e" stroke-width=".7"/>
<!-- axis icon -->
<g transform="translate(496 971.500)"><path d="M7 33.500h3.500M8.700 33.500v8M7 41.500h3.500M11.200 33.200l9 8.800M20.200 33.200l-9 8.800M11.500 44.500h8.500M11.500 43v3M20 43v3" stroke="#fff" stroke-width="3.400" stroke-linecap="round" stroke-linejoin="round" fill="none"/><path d="M7 33.500h3.500M8.700 33.500v8M7 41.500h3.500M11.200 33.200l9 8.800M20.200 33.200l-9 8.800M11.500 44.500h8.500M11.500 43v3M20 43v3" stroke="#000" stroke-width="1.200" fill="none"/></g>
<!-- hal task icon -->
<rect x="732.500" y="1005.500" width="13" height="11" fill="#e4e6e2" stroke="#fff"/><rect x="732" y="1005" width="14" height="2.500" fill="#3b6bb5"/>
<!-- workspace switcher -->
<rect x="1151.500" y="1001.500" width="101" height="21" fill="#2b2a29" stroke="#5a5853"/>
<rect x="1152.500" y="1002.500" width="24" height="19" fill="#9a9795" stroke="#1c1c1b"/><path d="M1176.500 1002v20M1201.500 1002v20M1226.500 1002v20" stroke="#323130"/>
<rect x="1158.500" y="1010.500" width="13.500" height="9" fill="#bdbbb8" stroke="#1e1e1d"/><path d="M1157 1004.500h3M1158.500 1004.500v7M1160.500 1004.500l7 5.500M1168 1003.500l-6 6.500" stroke="#fff" stroke-width="1" fill="none"/>
<!-- trash -->
<path d="M1259 1004h18l-2 18.500h-14z" fill="url(#tr)" stroke="#6a6a66" stroke-width=".8"/><ellipse cx="1268" cy="1004" rx="9.300" ry="2.300" fill="#a8a8a4" stroke="#6a6a66" stroke-width=".8"/>
<path d="M1262 1011l4 2l4-3l4 3l-1.500 6l-5 1.500l-4-2.500z" fill="#f0f0ee" opacity=".8"/>
</svg>
<div class="pt" style="left:70px;top:1002px;letter-spacing:-.1px">[EMC2 и Joystick • Станк...</div>
<div class="pt" style="left:298px;top:1002px;letter-spacing:-.16px">cnc — обозреватель фай...</div>
<div class="pt" style="left:526px;top:1002px;letter-spacing:-.1px">touchoff.ngc</div>
<div class="pt" style="left:755px;top:1002px;letter-spacing:-.07px;color:#fff">Установки HAL</div>
</body></html>
